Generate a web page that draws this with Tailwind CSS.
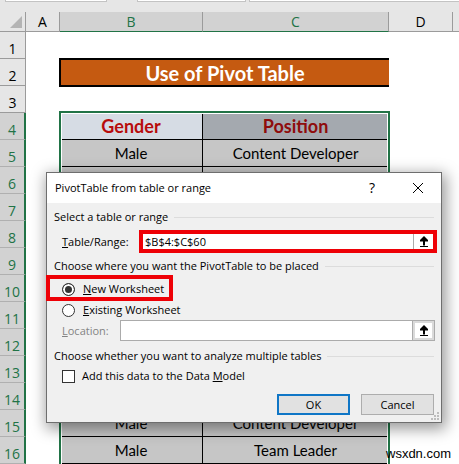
<!DOCTYPE html>
<html lang="en">
<head>
<meta charset="utf-8">
<title>Use of Pivot Table</title>
<script src="https://cdn.jsdelivr.net/npm/@tailwindcss/browser@4"></script>
</head>
<body class="relative flex h-screen flex-col overflow-hidden bg-white font-['Open_Sans','Noto_Sans',sans-serif] text-black">
<div class="flex h-3 shrink-0 items-start gap-[30px] bg-[#e6e6e6] pl-[5px]">
  <div class="h-0.5 w-[102px] border-x border-b border-[#c3c3c3] bg-white"></div>
  <div class="flex h-0.5 flex-1 gap-[3px]">
    <div class="w-[109px] border-x border-b border-[#c3c3c3] bg-white"></div>
    <div class="flex-1 border-l border-b border-[#c3c3c3] bg-white"></div>
  </div>
</div>
<main class="relative min-h-0 flex-1 overflow-hidden">
  <table class="w-full table-fixed border-separate border-spacing-0 text-center">
    <colgroup><col class="w-[26px]"><col class="w-[34px]"><col class="w-[143px]"><col class="w-[186px]"><col class="w-16"><col></colgroup>
    <thead class="bg-[#e6e6e6] text-sm leading-[18px]">
      <tr class="h-5 *:border-b *:border-[#9b9b9b] *:p-0 *:font-normal">
        <th class="border-r"><svg class="ml-2.5 h-3.5 w-3" viewBox="0 0 12 14" aria-label="Select all"><path d="M12 1v12H0z" fill="#b4b4b4"/></svg></th>
        <th class="border-r">A</th>
        <th class="border-r border-b-2 border-b-[#217346]! bg-[#d2d2d2] text-[#217346]">B</th>
        <th class="border-r border-b-2 border-b-[#217346]! bg-[#d2d2d2] text-[#217346]">C</th>
        <th class="border-r">D</th>
        <th></th>
      </tr>
    </thead>
    <tbody id="rows" class="font-['Lato',sans-serif] text-[15px] leading-5"></tbody>
  </table>
  <div class="pointer-events-none absolute top-[99px] -bottom-2 left-[59px] w-[331px] border-2 border-[#217346]"><div class="h-full border border-white"></div></div>
</main>

<section role="dialog" aria-labelledby="dlg" class="absolute top-[172px] left-[46px] w-[396px] border border-[#6e6e6e] bg-[#f0f0f0] text-[11px] leading-5 shadow-[2px_4px_14px_2px_rgba(0,0,0,0.4)]">
  <header class="flex h-[30px] items-center bg-white pr-[17px] pl-2">
    <h1 id="dlg" class="flex-1">PivotTable from table or range</h1>
    <button class="w-4 text-sm" aria-label="Help">?</button>
    <button class="ml-8 flex" aria-label="Close"><svg class="size-3" viewBox="0 0 12 12" stroke="#000" fill="none"><path d="M1 1l10 10M11 1L1 11"/></svg></button>
  </header>
  <form class="px-[7px] pt-1 pb-[7px]" onsubmit="return false">
    <div class="flex items-center gap-1.5"><h2>Select a table or range</h2><hr class="flex-1 border-[#dcdcdc]"></div>
    <div class="mt-[3px] -mr-[3px] flex items-center pl-2">
      <label for="range" class="w-[77px]"><u>T</u>able/Range:</label>
      <div class="flex h-[23px] flex-1 border-4 border-[#ee0006] bg-white">
        <input id="range" value="$B$4:$C$60" class="min-w-0 flex-1 pl-0.5 outline-none">
        <button class="flex w-5 items-center justify-center border-l border-[#ababab]" aria-label="Collapse dialog"><svg class="h-3 w-2.5" viewBox="0 0 10 12"><path d="M5 0l4 4v1.5H6v4H4v-4H1V4zM1 10h8v1H1z"/></svg></button>
      </div>
    </div>
    <div class="mt-[3px] flex items-center gap-1.5"><h2>Choose where you want the PivotTable to be placed</h2><hr class="flex-1 border-[#dcdcdc]"></div>
    <label class="-mt-px -ml-2 flex h-[26px] w-[127px] items-center gap-2 border-4 border-[#ee0006] pt-0.5 pl-3">
      <input type="radio" name="place" checked class="size-[13px] shrink-0 appearance-none rounded-full border border-[#333] bg-white checked:bg-[#333] checked:shadow-[inset_0_0_0_2px_white]">
      <span class="whitespace-nowrap"><u>N</u>ew Worksheet</span>
    </label>
    <label class="flex h-[18px] items-center gap-2 pl-2">
      <input type="radio" name="place" class="size-[13px] appearance-none rounded-full border border-[#333] bg-white">
      <span><u>E</u>xisting Worksheet</span>
    </label>
    <div class="mt-px -mr-px flex items-center pl-2">
      <label for="loc" class="w-[58px] text-[#838383]"><u>L</u>ocation:</label>
      <div class="flex h-[21px] flex-1 border border-[#ababab] bg-white">
        <input id="loc" class="min-w-0 flex-1 pl-1 outline-none">
        <button class="flex w-[21px] items-center justify-center border-2 border-[#dadada] shadow-[-1px_0_0_#ababab]" aria-label="Collapse dialog"><svg class="h-3 w-2.5" viewBox="0 0 10 12"><path d="M5 0l4 4v1.5H6v4H4v-4H1V4zM1 10h8v1H1z"/></svg></button>
      </div>
    </div>
    <div class="mt-[5px] flex items-center gap-1.5"><h2>Choose whether you want to analyze multiple tables</h2><hr class="flex-1 border-[#dcdcdc]"></div>
    <label class="flex items-center gap-[7px] pl-2">
      <input type="checkbox" class="size-[13px] appearance-none border border-[#333] bg-white">
      <span>Add this data to the Data <u>M</u>odel</span>
    </label>
    <div class="mt-2 flex justify-end gap-[11px]">
      <button class="h-[21px] w-[73px] border-2 border-[#0f76c6] bg-[#e1e1e1] leading-4">OK</button>
      <button class="h-[21px] w-[73px] border border-[#adadad] bg-[#e1e1e1] leading-4">Cancel</button>
    </div>
  </form>
  <svg class="absolute right-0.5 bottom-0.5 size-2" viewBox="0 0 8 8" fill="#bdbdbd"><path d="M6 0h2v2H6zM3 3h2v2H3zM6 3h2v2H6zM0 6h2v2H0zM3 6h2v2H3zM6 6h2v2H6z"/></svg>
</section>
<p class="absolute top-[446px] left-[386px] font-['Liberation_Sans',sans-serif] text-[13px] leading-4">wsxdn.com</p>

<script>
const data = [['Male','Content Developer'],['Male','Content Developer'],['Female','Team Leader'],['Male','Content Developer'],['Male','Team Leader'],['Female','Content Developer'],['Male','Content Developer'],['Male','Team Leader'],['Female','Content Developer'],['Male','Content Developer'],['Male','Content Developer'],['Male','Team Leader']];
const numSel = "border-r-2 border-b border-r-[#217346] border-b-[#b0b0b0] bg-[#d2d2d2] p-0 pb-px align-bottom font-['Open_Sans',sans-serif] text-sm leading-4 font-normal text-[#217346]";
const numTop = "border-r border-b border-[#9b9b9b] bg-[#e6e6e6] p-0 pb-px align-bottom font-['Open_Sans',sans-serif] text-sm leading-4 font-normal";
const cell = 'border-r border-b border-black bg-[#c6c6c6] p-0';
let html = '';
for (let r = 1; r <= 16; r++) {
  let cells = '<td></td><td></td><td></td>';
  if (r === 2) cells = '<td></td><td colspan="2" class="p-0"><div class="relative -my-px -ml-px flex h-[29px] items-center justify-center border-y-2 border-l-2 border-black bg-[#c55a11] text-xl font-bold text-white">Use of Pivot Table</div></td>';
  if (r === 4) cells = '<td></td><th class="border-r border-b border-black bg-[#d6dce4] p-0 text-lg leading-5 font-bold text-[#b80c0c]">Gender</th><th class="border-r border-b border-black bg-[#a4a9af] p-0 text-lg leading-5 font-bold text-[#8f0c0c]">Position</th>';
  if (r > 4) cells = `<td></td><td class="${cell}">${data[r-5][0]}</td><td class="${cell}">${data[r-5][1]}</td>`;
  html += `<tr class="h-[27px]"><th scope="row" class="${r < 4 ? numTop : numSel}">${r}</th>${cells}<td></td><td></td></tr>`;
}
document.getElementById('rows').innerHTML = html;
</script>
</body>
</html>
